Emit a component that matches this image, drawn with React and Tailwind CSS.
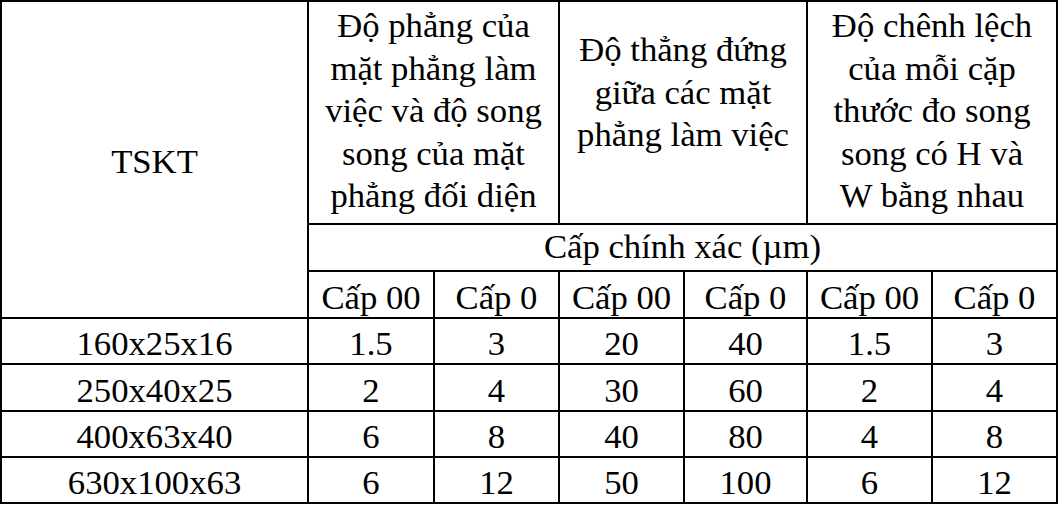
import React from "react";

const rows = [
  ["160x25x16", "1.5", "3", "20", "40", "1.5", "3"],
  ["250x40x25", "2", "4", "30", "60", "2", "4"],
  ["400x63x40", "6", "8", "40", "80", "4", "8"],
  ["630x100x63", "6", "12", "50", "100", "6", "12"],
];

const subHeads = ["Cấp 00", "Cấp 0", "Cấp 00", "Cấp 0", "Cấp 00", "Cấp 0"];

export default function App() {
  return (
    <div className="w-[1058px] h-[505px] bg-white">
      <div className="grid w-[1058px] bg-black p-[2px] gap-[2px] grid-cols-[305px_124px_123px_123px_121px_123px_123px] grid-rows-[221px_45px_45px_44px_45px_44px_44px] [font-family:Liberation_Serif,serif] text-[34.7px] text-black">
        <div className="row-span-3 bg-white flex justify-center items-start pt-[140px] leading-[39px]">
          TSKT
        </div>
        <div className="col-span-2 bg-white text-center pt-[3px] leading-[42.6px]">
          Độ phẳng của
          <br />
          mặt phẳng làm
          <br />
          việc và độ song
          <br />
          song của mặt
          <br />
          phẳng đối diện
        </div>
        <div className="col-span-2 bg-white text-center pt-[27px] leading-[42.6px]">
          Độ thẳng đứng
          <br />
          giữa các mặt
          <br />
          phẳng làm việc
        </div>
        <div className="col-span-2 bg-white text-center pt-[3px] leading-[42.6px]">
          Độ chênh lệch
          <br />
          của mỗi cặp
          <br />
          thước đo song
          <br />
          song có H và
          <br />
          W bằng nhau
        </div>
        <div className="col-span-6 bg-white flex justify-center items-end pb-[4px] leading-[39px]">
          Cấp chính xác (µm)
        </div>
        {subHeads.map((s, i) => (
          <div
            key={"s" + i}
            className="bg-white flex justify-center items-end leading-[39px] whitespace-nowrap"
          >
            {s}
          </div>
        ))}
        {rows.map((r, ri) =>
          r.map((c, ci) => (
            <div
              key={ri + "-" + ci}
              className="bg-white flex justify-center items-end leading-[39px] whitespace-nowrap"
            >
              {c}
            </div>
          ))
        )}
      </div>
    </div>
  );
}
